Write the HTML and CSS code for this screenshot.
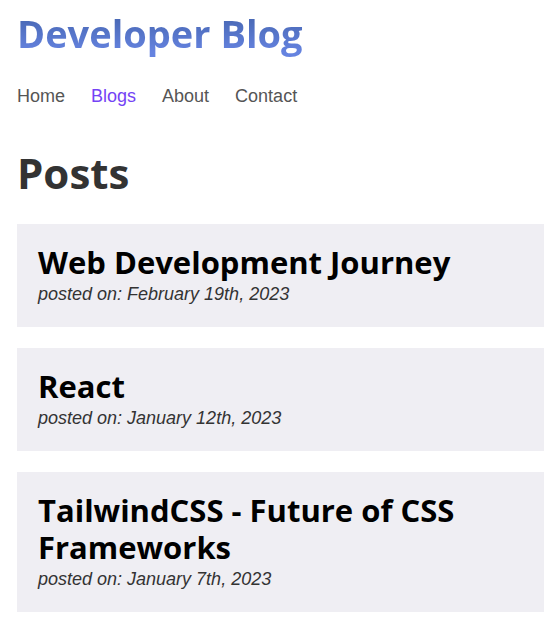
FILE: index.html
```html
<!DOCTYPE html>
<html lang="en">
<head>
<meta charset="utf-8">
<title>Developer Blog</title>
<link rel="stylesheet" href="styles.css">
</head>
<body>
<div class="page">
  <header class="header">
    <h1 class="brand">Developer Blog</h1>
    <nav class="nav">
      <a class="nav-link" href="#">Home</a>
      <a class="nav-link active" href="#">Blogs</a>
      <a class="nav-link" href="#">About</a>
      <a class="nav-link" href="#">Contact</a>
    </nav>
  </header>
  <main>
    <h2 class="posts-title">Posts</h2>
    <div class="posts">
      <article class="post">
        <h3 class="post-title">Web Development Journey</h3>
        <p class="post-date">posted on: February 19th, 2023</p>
      </article>
      <article class="post">
        <h3 class="post-title">React</h3>
        <p class="post-date">posted on: January 12th, 2023</p>
      </article>
      <article class="post">
        <h3 class="post-title">TailwindCSS - Future of CSS Frameworks</h3>
        <p class="post-date">posted on: January 7th, 2023</p>
      </article>
    </div>
  </main>
</div>
</body>
</html>
```

FILE: styles.css
```css
* { box-sizing: border-box; }
body {
  margin: 0;
  background: #ffffff;
  font-family: "Liberation Sans", Arial, sans-serif;
}
.page {
  padding: 0 11px 0 17px;
}
.brand {
  margin: 0;
  padding-top: 8px;
  font-family: "Open Sans", sans-serif;
  font-weight: 700;
  font-size: 38px;
  line-height: 50px;
  background: linear-gradient(to bottom, #4464ad 20%, #6583e0 90%);
  -webkit-background-clip: text;
  background-clip: text;
  color: transparent;
  display: inline-block;
}
.nav {
  display: flex;
  gap: 26px;
  margin-top: 27px;
}
.nav-link {
  font-size: 18px;
  line-height: 22px;
  color: #555555;
  text-decoration: none;
}
.nav-link.active { color: #7443f5; }
.posts-title {
  margin: 36px 0 0;
  font-family: "Open Sans", sans-serif;
  font-weight: 700;
  font-size: 42px;
  line-height: 60px;
  color: #333333;
}
.posts {
  display: flex;
  flex-direction: column;
  gap: 21px;
  margin-top: 21px;
}
.post {
  background: #efeef3;
  padding: 20px 21px 22px;
}
.post-title {
  margin: 0;
  font-family: "Open Sans", sans-serif;
  font-weight: 700;
  font-size: 31px;
  line-height: 37px;
  color: #000000;
}
.post-date {
  margin: 2px 0 0;
  font-size: 18px;
  line-height: 22px;
  font-style: italic;
  color: #333333;
}
```
